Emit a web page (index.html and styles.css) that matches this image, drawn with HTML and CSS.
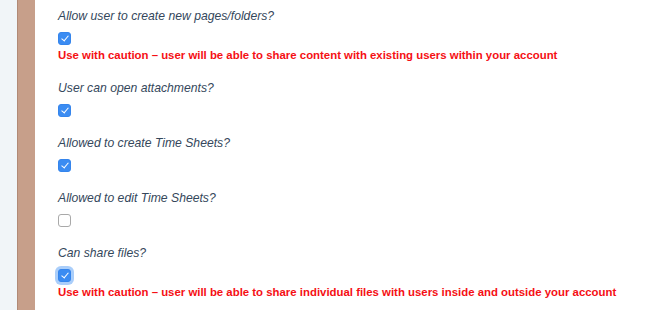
FILE: index.html
```html
<!DOCTYPE html>
<html lang="en">
<head>
    <meta charset="UTF-8">
    <title>User permissions</title>
    <link rel="stylesheet" href="styles.css">
</head>
<body>
    <div class="layout">
        <div class="rail"></div>
        <div class="edge"></div>
        <div class="content">
            <div class="field">
                <label class="question">Allow user to create new pages/folders?</label>
                <input type="checkbox" checked>
                <p class="caution">Use with caution – user will be able to share content with existing users within your account</p>
            </div>
            <div class="field">
                <label class="question">User can open attachments?</label>
                <input type="checkbox" checked>
            </div>
            <div class="field">
                <label class="question">Allowed to create Time Sheets?</label>
                <input type="checkbox" checked>
            </div>
            <div class="field">
                <label class="question">Allowed to edit Time Sheets?</label>
                <input type="checkbox">
            </div>
            <div class="field">
                <label class="question">Can share files?</label>
                <input type="checkbox" class="focused" checked>
                <p class="caution">Use with caution – user will be able to share individual files with users inside and outside your account</p>
            </div>
        </div>
    </div>
</body>
</html>
```

FILE: styles.css
```css
body {
    margin: 0;
    padding: 0;
    font-family: "Liberation Sans", Arial, sans-serif;
    background: #fff;
    overflow: hidden;
}
.layout {
    display: flex;
    height: 310px;
}
.rail {
    width: 17px;
    background: #f1f5f8;
}
.edge {
    width: 17px;
    background: #c79f8a;
    border-left: 1px solid #b18a76;
}
.content {
    flex: 1;
    padding: 9px 0 0 23px;
}
.field {
    display: flex;
    flex-direction: column;
    align-items: flex-start;
    margin-bottom: 19px;
}
.question {
    font-style: italic;
    font-size: 12.2px;
    line-height: 14px;
    color: #34475b;
}
input[type="checkbox"] {
    appearance: none;
    -webkit-appearance: none;
    box-sizing: border-box;
    width: 13px;
    height: 13px;
    margin: 9px 0 0 0;
    border: 1px solid #a9a9a9;
    border-radius: 3px;
    background: #fff;
    position: relative;
}
input[type="checkbox"]:checked {
    background: #3b8cf2;
    border-color: #3585ec;
}
input[type="checkbox"]:checked::after {
    content: "";
    position: absolute;
    left: 3.5px;
    top: 1px;
    width: 3px;
    height: 6px;
    border: solid #fff;
    border-width: 0 1.5px 1.5px 0;
    transform: rotate(40deg);
}
input.focused {
    box-shadow: 0 0 0 3px rgba(100, 165, 245, 0.55);
}
.caution {
    margin: 3px 0 0;
    font-size: 11.4px;
    line-height: 14px;
    font-weight: bold;
    color: #f50f14;
}
```
